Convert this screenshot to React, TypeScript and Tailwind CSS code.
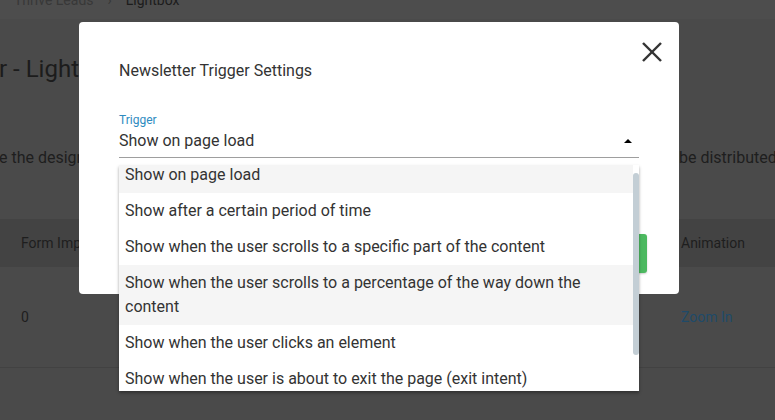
import React from 'react'

const OPCIONES = [
  'Show on page load',
  'Show after a certain period of time',
  'Show when the user scrolls to a specific part of the content',
  'Show when the user scrolls to a percentage of the way down the content',
  'Show when the user clicks an element',
  'Show when the user is about to exit the page (exit intent)',
]

// filas resaltadas en la lista (la seleccionada y la que tiene el hover)
const RESALTADAS = [0, 3]

export default function App() {
  return (
    <div
      className="relative w-[775px] h-[420px] overflow-hidden bg-[#4a4a4a] text-[#1e1e1e]"
      style={{ fontFamily: 'Roboto, "Liberation Sans", sans-serif' }}
    >
      {/* Barra superior con breadcrumb */}
      <div className="h-[19px] bg-[#4d4d4d] overflow-hidden">
        <div className="flex items-center -mt-[10px] pl-[14px] text-[14px] leading-5 whitespace-nowrap">
          <span className="text-[#383838]">Thrive Leads</span>
          <span className="ml-[14px] text-[#383838]">›</span>
          <span className="ml-[14px] text-[#1c1c1c]">Lightbox</span>
        </div>
      </div>

      {/* Cabecera de la página */}
      <h1 className="pt-[34px] -ml-[1px] text-[24px] leading-8 whitespace-nowrap text-[#1c1c1c]">
        r - Lightbox
      </h1>

      <p className="flex mt-[61px] text-[16px] leading-6 whitespace-nowrap text-[#1e1e1e]">
        <span className="w-[680px] shrink-0 overflow-hidden -ml-[1px]">
          e the design of your lightbox and choose how the form will
        </span>
        <span>be distributed</span>
      </p>

      {/* Tabla */}
      <div className="mt-[49px] text-[14px]">
        <div className="flex items-center h-[48px] bg-[#434343] text-[#1e1e1e]">
          <div className="w-[681px] shrink-0 pl-[21px] whitespace-nowrap overflow-hidden">Form Impressions</div>
          <div>Animation</div>
        </div>
        <div className="flex items-center h-[101px] border-b border-[#424242]">
          <div className="w-[681px] shrink-0 pl-[21px]">0</div>
          <div className="text-[#1f4a69]">Zoom In</div>
        </div>
      </div>

      {/* Modal */}
      <div className="absolute left-[79px] top-[22px] w-[600px] rounded-[4px] bg-white pt-[37px] pb-[21px] text-[#333]">
        <button className="absolute right-[17px] top-[20px] w-[20px] h-[20px]">
          <svg width="20" height="20" viewBox="0 0 20 20" fill="none" stroke="#333" strokeWidth="2.4">
            <line x1="1" y1="1" x2="19" y2="19" />
            <line x1="19" y1="1" x2="1" y2="19" />
          </svg>
        </button>

        <p className="px-10 text-[16px] leading-6">Newsletter Trigger Settings</p>

        {/* Campo Trigger */}
        <div className="relative z-10 mx-10 mt-[29px]">
          <p className="text-[12px] leading-4 text-[#2e8bc0]">Trigger</p>
          <div className="flex items-center justify-between mt-[1px] pb-[4px] border-b border-[#9e9e9e]">
            <span className="text-[16px] leading-6">Show on page load</span>
            <svg className="mr-[7px] mb-[1px]" width="8" height="4" viewBox="0 0 8 4">
              <polygon points="0,4 4,0 8,4" fill="#000" />
            </svg>
          </div>

          {/* Lista desplegable */}
          <div className="absolute left-0 right-0 top-[53px] h-[226px] flex bg-white shadow-[0_2px_3px_rgba(0,0,0,0.35)] overflow-hidden">
            <ul className="flex-1 -mt-[8px]">
              {OPCIONES.map((o, i) => (
                <li
                  key={o}
                  className={
                    'pl-[6px] pr-[8px] py-[6px] text-[16px] leading-6 text-[#333] ' +
                    (RESALTADAS.includes(i) ? 'bg-[#f5f5f5]' : 'bg-white')
                  }
                >
                  {o}
                </li>
              ))}
            </ul>
            <div className="w-[6px] shrink-0 pt-[8px]">
              <div className="h-[182px] w-[6px] rounded-[3px] bg-[#c3ced5]" />
            </div>
          </div>
        </div>

        {/* Pie */}
        <div className="flex justify-end pr-[32px] mt-[76px]">
          <button className="h-[39px] w-[110px] rounded-[3px] bg-[#4cb960] text-white text-[14px] shadow-[0_1px_2px_rgba(0,0,0,0.2)]">
            Save
          </button>
        </div>
      </div>
    </div>
  )
}
